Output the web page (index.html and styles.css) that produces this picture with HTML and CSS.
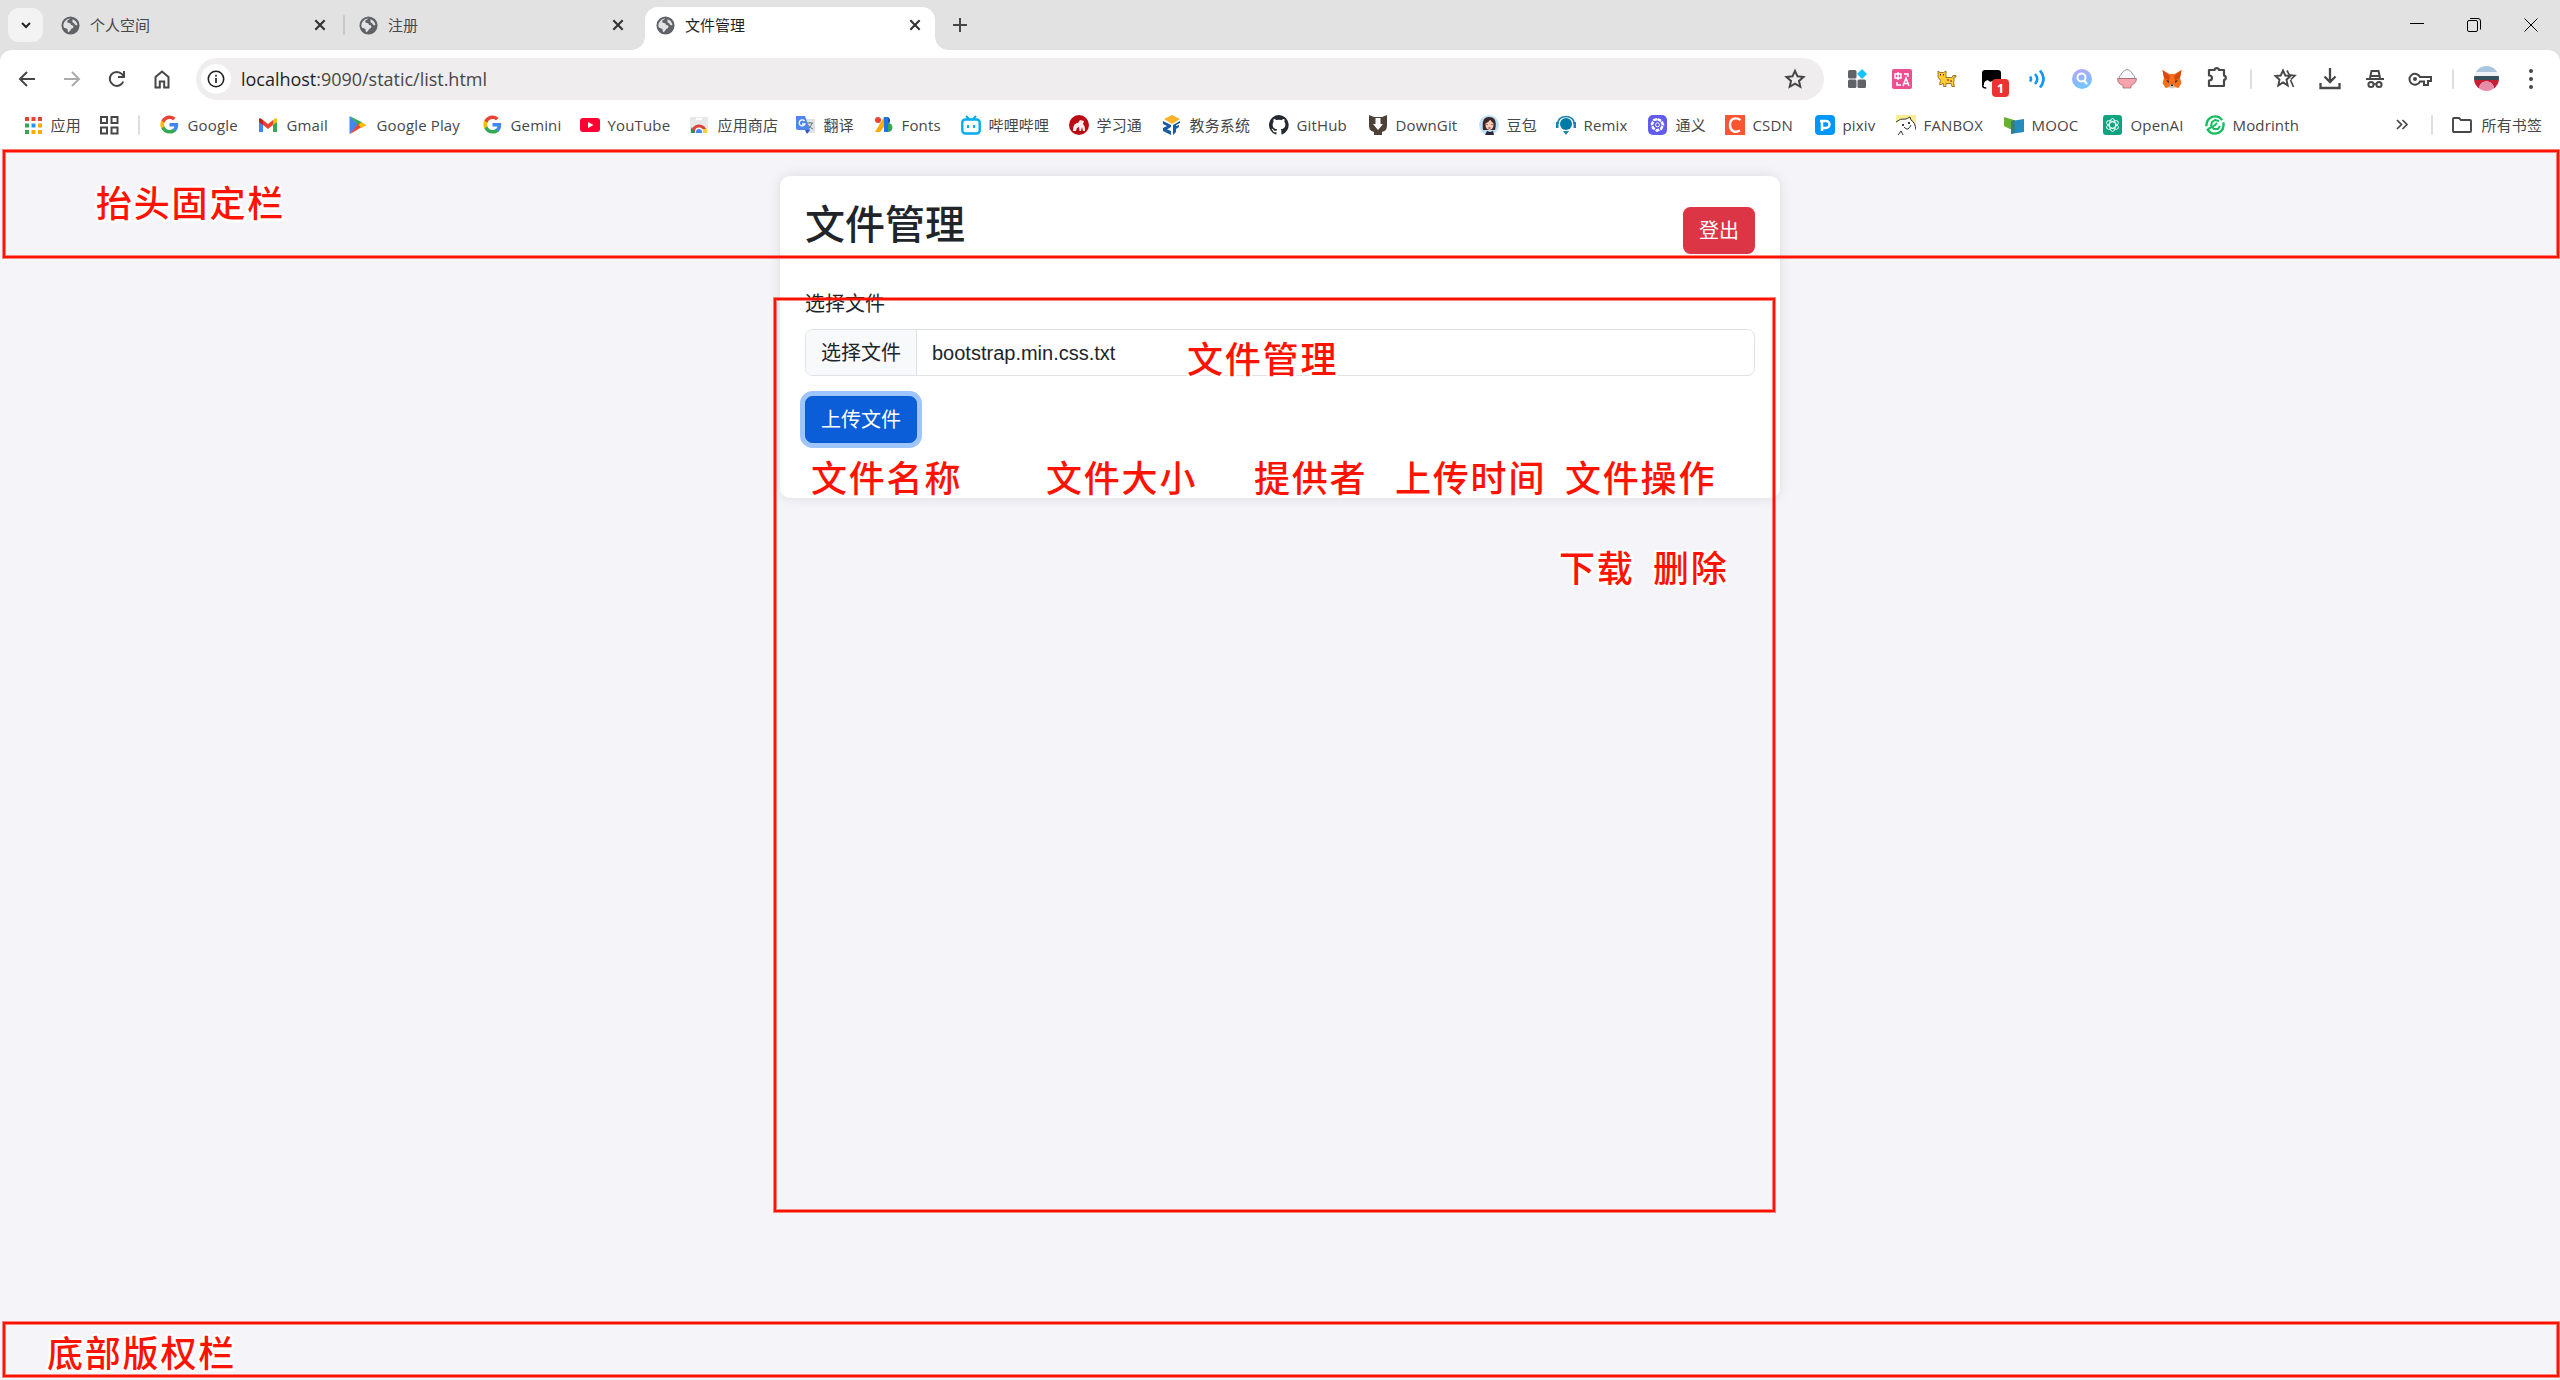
FILE: index.html
```
<!DOCTYPE html>
<html lang="zh-CN">
<head>
<meta charset="utf-8">
<title>文件管理</title>
<link rel="stylesheet" href="styles.css">
</head>
<body>
<svg width="0" height="0" class="defs">
  <symbol id="globe" viewBox="0 0 20 20"><circle cx="10" cy="10" r="9.5" fill="#5f6368"/><path d="M10 2.5c-1 1.500-3.200 1-3.500 3-.2 1.500 1.500 2 3 2 1 .3.300 1.500 1.500 2 1.500.5 2.500 1 2 2.500-.5 1-2 1-2.500 2-.5 1.300-1.500 2.500-3 3-.8-1-.2-2.500-1-3.500-1-.8-2.500-.5-3.500-1.500L2.500 10c0-4 3.500-7.500 7.500-7.500zM12 3.500c2.500.5 5 3.200 5.300 6-1.300.5-2.500 0-3-1.200-.4-1-1.800-1-2.200-2-.3-1 .4-1.800-.1-2.800z" fill="#e2e2e2"/></symbol>
  <symbol id="x" viewBox="0 0 12 12"><path d="M2 2l8 8M10 2l-8 8" stroke="currentColor" stroke-width="1.8"/></symbol>
  <symbol id="g" viewBox="0 0 48 48"><path fill="#4285f4" d="M46 24.500c0-1.600-.2-3.100-.4-4.500H24v9h12.400c-.5 2.900-2.200 5.300-4.600 7v6h7.500C43.500 38 46 31.800 46 24.500z"/><path fill="#34a853" d="M24 47c6.200 0 11.400-2.100 15.300-5.600l-7.500-5.800c-2.100 1.400-4.700 2.200-7.800 2.200-6 0-11.100-4-12.900-9.500H3.400v6C7.200 41.800 15 47 24 47z"/><path fill="#fbbc05" d="M11.100 28.300c-.9-2.800-.9-5.800 0-8.600v-6H3.400a23 23 0 0 0 0 20.600z"/><path fill="#ea4335" d="M24 10.200c3.400 0 6.400 1.200 8.800 3.400l6.600-6.600C35.400 3.300 30.200 1 24 1 15 1 7.200 6.200 3.400 13.700l7.700 6C12.900 14.200 18 10.200 24 10.200z"/></symbol>
  <symbol id="star" viewBox="0 0 24 24"><path d="M12 3.800l2.500 5.500 6 .6-4.500 4 1.300 5.900-5.300-3.100-5.300 3.100L8 13.900l-4.500-4 6-.6z" fill="none" stroke="#474747" stroke-width="2"/></symbol>
</svg>

<header class="browser">
  <div class="tabstrip">
    <button class="tab-search"><svg width="14" height="14" viewBox="0 0 14 14"><path d="M3 5l4 4 4-4" fill="none" stroke="#222" stroke-width="2"/></svg></button>
    <div class="tab first"><svg class="fav"><use href="#globe"/></svg><span>个人空间</span><svg class="close"><use href="#x"/></svg></div>
    <i class="tab-sep"></i>
    <div class="tab second"><svg class="fav"><use href="#globe"/></svg><span>注册</span><svg class="close"><use href="#x"/></svg></div>
    <div class="tab active"><svg class="fav"><use href="#globe"/></svg><span>文件管理</span><svg class="close"><use href="#x"/></svg></div>
    <button class="new-tab"><svg width="14" height="14" viewBox="0 0 14 14"><path d="M7 0v14M0 7h14" stroke="#474747" stroke-width="2"/></svg></button>
    <div class="win">
      <svg width="14" height="14" viewBox="0 0 14 14"><path d="M0 5.500h14" stroke="#000"/></svg>
      <svg width="14" height="14" viewBox="0 0 14 14"><rect x=".5" y="2.500" width="10" height="11" rx="1.500" fill="none" stroke="#000"/><path d="M3 .5h8a2.500 2.500 0 0 1 2.500 2.500v8.500" fill="none" stroke="#000"/></svg>
      <svg width="14" height="14" viewBox="0 0 14 14"><path d="M.5.500l13 13M13.500.500l-13 13" stroke="#000"/></svg>
    </div>
  </div>

  <div class="toolbar">
    <nav class="nav">
      <svg viewBox="0 0 20 20"><path d="M18 10H3M10 3l-7 7 7 7" fill="none" stroke="#474747" stroke-width="2"/></svg>
      <svg viewBox="0 0 20 20"><path d="M2 10h15M10 3l7 7-7 7" fill="none" stroke="#ababab" stroke-width="2"/></svg>
      <svg viewBox="0 0 20 20"><path d="M16.300 12.500A7 7 0 1 1 15 5.200L17 7.500M17 2v6h-6" fill="none" stroke="#474747" stroke-width="2"/></svg>
      <svg viewBox="0 0 20 20"><path d="M3.500 18.500V8L10 2.500 16.500 8v10.500h-4.300v-6H7.800v6z" fill="none" stroke="#474747" stroke-width="2"/></svg>
    </nav>
    <div class="omnibox">
      <span class="info"><svg width="20" height="20" viewBox="0 0 20 20"><circle cx="10" cy="10" r="7.700" fill="none" stroke="#222" stroke-width="1.600"/><path d="M10 9v5M10 5.800v1.800" stroke="#222" stroke-width="1.700"/></svg></span>
      <span class="url"><b>localhost</b>:9090/static/list.html</span>
      <svg class="bookmark-star"><use href="#star"/></svg>
    </div>
    <div class="exts">
      <svg viewBox="0 0 20 20"><g fill="#5f6368"><rect x="1" y="1" width="8.500" height="8.500" rx="1.500"/><rect x="1" y="10.500" width="8.500" height="8.500" rx="1.500"/><rect x="10.500" y="10.500" width="8.500" height="8.500" rx="1.500"/></g><path d="M15 0l5 5-5 5-5-5z" fill="#14c4ff"/></svg>
      <svg viewBox="0 0 20 20"><rect width="20" height="20" rx="2" fill="#ee4f91"/><path d="M3 5h6v4H3zM6 3v8M5 13v3h4M12 5h4v3M11 17l3-8 3 8M12 14.500h4" fill="none" stroke="#fff" stroke-width="1.500"/></svg>
      <svg viewBox="0 0 20 20"><path d="M1 2l2 1.500h3.500L9 2v6.500h6l1-2h3v1.500h-2v4l-.5 2 1 3.500h-2.500l-1-3H9v3H6.500l-.5-3.500-1.500 1.500H2.500l1-4L1 8z" fill="#fc3" stroke="#8d6b2c" stroke-width=".9"/><path d="M3.500 5v1.500M6.500 5v1.500M10 11h2M13 12h2" stroke="#714"/></svg>
      <span class="badged"><svg viewBox="0 0 20 20"><path d="M0 4a3 3 0 0 1 3-3h13a3 3 0 0 1 3 3v12H0z" fill="#000"/><path d="M2 18v-4c2-4 5-3 6-1 3-2 6-2 8 0v6H4z" fill="#fff"/><path d="M.800 13v4q0 2 3.500 2" fill="none" stroke="#000" stroke-width="1.500"/></svg><em>1</em></span>
      <svg viewBox="0 0 20 20"><path d="M3 7.500q2 2.500 0 5M8 5q4.500 5 0 10M13 1.500q7 8.500 0 17" fill="none" stroke="#1296f3" stroke-width="2.600"/></svg>
      <svg viewBox="0 0 20 20"><linearGradient id="lg" x2=".3" y2="1"><stop stop-color="#b8a4ff"/><stop offset="1" stop-color="#73c5ff"/></linearGradient><circle cx="10" cy="10" r="10" fill="url(#lg)"/><circle cx="9.500" cy="8.500" r="4" fill="none" stroke="#fff" stroke-width="2"/><path d="M12 11.500l3 3.500" stroke="#fff" stroke-width="2.200"/></svg>
      <svg viewBox="0 0 20 20"><path d="M2 9.500C2 7 4 6 5 4c1.500-2.500 3.500-3.300 5-3.300S13.500 1.500 15 4c1 2 3 3 3 5.500z" fill="#f7f9ff" stroke="#778" stroke-width=".8"/><path d="M.5 9.500h19c0 4-3 6-5.500 7v2.500H6v-2.500C3 15.500.500 13.500.500 9.500z" fill="#f4a4aa" stroke="#a35d69" stroke-width=".7"/></svg>
      <svg viewBox="0 0 20 20"><path d="M.5 1l7 4h5l7-4-1.500 8 1.500 5-3 5-4-1h-5l-4 1-3-5L2 9z" fill="#f5701d"/><path d="M.5 1L8 7l-1 5-5-3zM19.500 1L12 7l1 5 5-3z" fill="#d94a13"/><path d="M4 11l3 1-.5 2zM16 11l-3 1 .5 2z" fill="#222"/><path d="M7 18l1.500-3h3l1.500 3-1 1.200H8z" fill="#d7c5b8"/><path d="M8.500 15.500h3l-.5 1.500H9z" fill="#222"/></svg>
      <svg class="puzzle" viewBox="0 0 24 24"><path d="M4 5h5.500a2.300 2.300 0 0 1 4.500 0H19v5.500a2.300 2.300 0 0 1 0 4.500v6H4v-5.500c4 0 4-5 0-5z" fill="none" stroke="#474747" stroke-width="2.200" stroke-linejoin="round"/></svg>
    </div>
    <i class="sep"></i>
    <div class="tools">
      <svg viewBox="0 0 24 24"><path d="M10 3.500l2.300 5 5.200.5-4 3.700 1.200 5.800-4.700-3-4.700 3 1.200-5.800-4-3.700 5.200-.5z" fill="none" stroke="#474747" stroke-width="1.900"/><path d="M14 3.500l2.300 4.300 5.700.8-4.200 3.900M17.500 13l3 7" fill="none" stroke="#474747" stroke-width="1.700"/></svg>
      <svg viewBox="0 0 24 24"><path d="M12 1v14M6.500 9.500L12 15l5.500-5.500M2.500 16v5h19v-5" fill="none" stroke="#474747" stroke-width="2.300"/></svg>
      <svg viewBox="0 0 24 24"><path d="M3 12h18M7 11l1.500-7h7L17 11" fill="none" stroke="#474747" stroke-width="2"/><path d="M7.500 9h9" stroke="#474747" stroke-width="2"/><circle cx="8" cy="17.500" r="2.600" fill="none" stroke="#474747" stroke-width="2"/><circle cx="16" cy="17.500" r="2.600" fill="none" stroke="#474747" stroke-width="2"/><path d="M10.500 17h3" stroke="#474747" stroke-width="1.600"/></svg>
      <svg viewBox="0 0 24 24"><path d="M12 10a5.500 5.500 0 1 0 0 4.500h4V18h4v-4h3v-4z" fill="none" stroke="#474747" stroke-width="2"/><circle cx="7" cy="12" r="2" fill="#474747"/></svg>
    </div>
    <i class="sep"></i>
    <span class="avatar"></span>
    <svg class="menu" width="6" height="22" viewBox="0 0 6 22"><g fill="#474747"><circle cx="3" cy="3" r="2"/><circle cx="3" cy="11" r="2"/><circle cx="3" cy="19" r="2"/></g></svg>
  </div>

  <div class="bookmarks">
    <a class="apps"><svg viewBox="0 0 20 20"><g fill="#ea4335"><path d="M2 2h4v4H2zM8.500 2h4v4h-4zM15 2h4v4h-4z"/></g><path d="M2 8.500h4v4H2z" fill="#34a853"/><path d="M8.500 8.500h4v4h-4z" fill="#2196f3"/><path d="M15 8.500h4v4h-4zM8.500 15h4v4h-4zM15 15h4v4h-4z" fill="#fbab05"/><path d="M2 15h4v4H2z" fill="#34a853"/></svg>应用</a>
    <a><svg viewBox="0 0 20 20"><path d="M2 2h6v6H2zM12.500 2h6v6h-6zM2 12.500h6v6H2zM12.500 12.500h6v6h-6z" fill="none" stroke="#474747" stroke-width="2"/></svg></a>
    <i class="sep"></i>
    <a><svg viewBox="0 0 20 20"><use href="#g" width="19" height="19"/></svg>Google</a>
    <a><svg viewBox="0 0 20 20"><path d="M0 5v12h4V8z" fill="#4285f4"/><path d="M18 5v12h-4V8z" fill="#34a853"/><path d="M0 4v3l4 3V5L2 3.500Q0 3 0 4z" fill="#c5221f"/><path d="M18 4v3l-4 3V5l2-1.500q2-.5 2 .5z" fill="#fbbc04"/><path d="M4 5l5 4 5-4v5l-5 4-5-4z" fill="#ea4335"/></svg>Gmail</a>
    <a><svg viewBox="0 0 20 20"><path d="M.5 1v18l9-9z" fill="#4285f4"/><path d="M.5 1l13 6.500-4 3z" fill="#34a853"/><path d="M.5 19.500l13-8-4-3z" fill="#ea4335"/><path d="M12.500 7l5 3-5 3-3-3z" fill="#fbbc04"/></svg>Google Play</a>
    <a><svg viewBox="0 0 20 20"><use href="#g" width="19" height="19"/></svg>Gemini</a>
    <a><svg viewBox="0 0 20 20"><rect y="3" width="20" height="14" rx="3" fill="#ff0033"/><path d="M8 7l5.500 3L8 13z" fill="#fff"/></svg>YouTube</a>
    <a><svg viewBox="0 0 20 20"><path d="M0 2h18v16H0z" fill="#e8e8e8"/><path d="M6 3h6v2H6z" fill="#fff"/><path d="M1 18a8 8 0 0 1 16-1z" fill="#db4437"/><path d="M1 12l4 6H1z" fill="#0f9d58"/><path d="M11 18l1-4h5v4z" fill="#ffcd40"/><circle cx="9" cy="16.500" r="4" fill="#fff"/><circle cx="9" cy="17" r="3" fill="#4285f4"/><path d="M0 18h20v2H0z" fill="#fff"/></svg>应用商店</a>
    <a><svg viewBox="0 0 20 20"><path d="M7 4h12v14H10z" fill="#e0e0e0"/><path d="M11 8h6M14 7v1M16 8q-1 4-4 6M12 10q2 3 5 4" stroke="#607d8b" fill="none"/><path d="M0 1h9l5 14H2q-2 0-2-2z" fill="#4f86ec"/><path d="M9 15h5l-3 4z" fill="#2a56c6"/><path d="M8.500 6A3 3 0 1 0 9 9H6" stroke="#fff" stroke-width="1.300" fill="none"/></svg>翻译</a>
    <a><svg viewBox="0 0 20 20"><circle cx="4" cy="5" r="3" fill="#ea4335"/><path d="M10 2h3v6L6 17H1z" fill="#fbab00"/><path d="M10 2h4v15h-4z" fill="#1a73e8"/><path d="M14 2a4 4 0 0 1 0 7z" fill="#174ea6"/><path d="M14 8a4.500 4.500 0 0 1 0 9z" fill="#34a853"/></svg>Fonts</a>
    <a><svg viewBox="0 0 20 20"><path d="M5 1l3 3M15 1l-3 3" stroke="#00aeec" stroke-width="2"/><rect x="1.300" y="4.500" width="17.400" height="14" rx="3" fill="none" stroke="#00aeec" stroke-width="2.400"/><path d="M7 10v3M13 10v3" stroke="#00aeec" stroke-width="2"/></svg>哔哩哔哩</a>
    <a><svg viewBox="0 0 20 20"><circle cx="10" cy="10" r="10" fill="#b90b13"/><path d="M4 16c0-6 2-8 5-8l2-3 4 1-1 3c2 2 2 4 2 7h-2l-1-4-1 4h-1.500l-.5-4-2 1-1 3z" fill="#ffebea"/></svg>学习通</a>
    <a><svg viewBox="0 0 20 20"><path d="M10 0l8 4-8 5-8-5z" fill="#f8b329"/><path d="M1 6l8 4v2l-4 2.500 4 1.500v4l-8-4v-3l4-2-4-2z" fill="#195ba6"/><path d="M18 6l-7 4v10l3-3v-3l3-2v-2l-3 1v-1l4-2z" fill="#195ba6"/></svg>教务系统</a>
    <a><svg viewBox="0 0 16 16"><path fill="#24292f" d="M8 0a8 8 0 0 0-2.500 15.600c.4.100.5-.2.500-.4v-1.500c-2 .4-2.600-.5-2.800-1-.1-.2-.5-1-.8-1.100-.3-.2-.7-.6 0-.6s1.100.6 1.200.8c.7 1.200 1.900.9 2.400.7.1-.5.300-.9.500-1.100-1.800-.2-3.600-.9-3.600-4 0-.8.300-1.600.8-2.100-.1-.2-.4-1 .1-2.100 0 0 .7-.2 2.200.8a7.500 7.500 0 0 1 4 0c1.500-1 2.200-.8 2.200-.8.4 1.100.2 1.900.1 2.100.5.600.8 1.300.8 2.100 0 3.100-1.900 3.800-3.700 4 .3.200.5.700.5 1.500v2.200c0 .2.200.5.600.4A8 8 0 0 0 8 0z"/></svg>GitHub</a>
    <a><svg viewBox="0 0 20 20"><path d="M1 0l5 2h8l5-2v10c0 5-2 6-5 7v3H6v-3c-3-1-5-2-5-7z" fill="#4d4038"/><path d="M7.500 3h5v6h2.500l-5 6-5-6h2.500z" fill="#fff"/></svg>DownGit</a>
    <a><svg viewBox="0 0 20 20"><circle cx="10" cy="10" r="10" fill="#bfdff8"/><path d="M4 15c-1-8 0-13 6-13s8 4 6 13z" fill="#3b2826"/><ellipse cx="10.500" cy="10" rx="4" ry="5" fill="#f8cbb8"/><path d="M6 20l2-4 3 1 3-1 1 4z" fill="#282838"/><path d="M6 8q4 0 5-4 1 3 4 4V4H6z" fill="#3b2826"/><path d="M8 9v1M13 9v1M9.500 13h2" stroke="#712"/></svg>豆包</a>
    <a><svg viewBox="0 0 20 20"><circle cx="10" cy="9" r="6" fill="#007aa6"/><path d="M2 9C1 -1 19 -1 18 9" fill="none" stroke="#1b84a8" stroke-width="1.600"/><path d="M0 7h2.500v6H0zM17.500 7H20v6h-2.500zM7 16h6l-3 4z" fill="#1b84a8"/></svg>Remix</a>
    <a><svg viewBox="0 0 20 20"><rect width="19" height="20" rx="5" fill="#615ced"/><path d="M9.500 4l4 2 1.500 4-2 4-4 1.500L5 13 4 9l2-4z" fill="none" stroke="#fff" stroke-width="2.500" stroke-dasharray="4 1"/><circle cx="9.500" cy="9.800" r="2" fill="none" stroke="#fff"/></svg>通义</a>
    <a><svg viewBox="0 0 20 20"><rect width="20" height="20" fill="#fc5531"/><path d="M15.500 5C10 1.500 5 4 5 10s5 8.500 10 5.500" fill="none" stroke="#fff" stroke-width="2.400"/></svg>CSDN</a>
    <a><svg viewBox="0 0 20 20"><rect width="20" height="20" rx="4" fill="#0096fa"/><path d="M7 16V6H5M7 6h4a3.500 3.500 0 0 1 0 7H7" fill="none" stroke="#fff" stroke-width="2.500"/></svg>pixiv</a>
    <a><svg viewBox="0 0 20 20"><path d="M0 0h20v13H0z" fill="#f9ee93"/><path d="M0 20V9q3-5 10-5l4-2 1 3q4 2 5 10v5z" fill="#fff"/><path d="M0 7q4-4 10-3l4-2 1 3q4 2 5 10M2 20l3-4 2 4M8 12q4 5 7-2" fill="none" stroke="#333"/><circle cx="7" cy="10" r="1"/><circle cx="13" cy="8" r="1"/></svg>FANBOX</a>
    <a><svg viewBox="0 0 20 20"><path d="M0 2l10 3v11L0 11z" fill="#67b12e"/><path d="M7 6l13-2v13L7 19z" fill="#258dbd"/><path d="M7 6l4-1v12l-4 2z" fill="#397d83"/></svg>MOOC</a>
    <a><svg viewBox="0 0 20 20"><rect width="19" height="20" rx="3" fill="#10a37f"/><g fill="none" stroke="#fff" stroke-width="1"><ellipse cx="9.500" cy="10" rx="3" ry="6.500"/><ellipse cx="9.500" cy="10" rx="3" ry="6.500" transform="rotate(60 9.500 10)"/><ellipse cx="9.500" cy="10" rx="3" ry="6.500" transform="rotate(120 9.500 10)"/></g></svg>OpenAI</a>
    <a><svg viewBox="0 0 20 20"><circle cx="10" cy="10" r="8.600" fill="none" stroke="#18bd61" stroke-width="2.400" stroke-dasharray="23 2.500"/><path d="M14 6l-4-1-3 2-1 4 3 3h4l2-3M3 14l4-2 3-2 2-2" fill="none" stroke="#18bd61" stroke-width="2"/></svg>Modrinth</a>
    <a><svg viewBox="0 0 20 20"><path d="M2 5l4.500 4.500L2 14M7.500 5l4.500 4.500L7.500 14" fill="none" stroke="#474747" stroke-width="1.700"/></svg></a>
    <i class="sep"></i>
    <a class="all"><svg viewBox="0 0 22 20"><path d="M1 4q0-1 1-1h5l2 2h9q1 0 1 1v10q0 1-1 1H2q-1 0-1-1z" fill="none" stroke="#474747" stroke-width="1.900"/></svg>所有书签</a>
  </div>
</header>

<main class="page">
  <section class="card">
    <div class="card-head"><h2>文件管理</h2><button class="btn danger">登出</button></div>
    <label>选择文件</label>
    <div class="file-input"><span class="choose">选择文件</span><span class="name">bootstrap.min.css.txt</span></div>
    <button class="btn primary">上传文件</button>
  </section>
</main>

<div class="annotations">
  <div class="box top"></div>
  <div class="box middle"></div>
  <div class="box bottom"></div>
  <span class="note n-top">抬头固定栏</span>
  <span class="note n-title">文件管理</span>
  <span class="note n-name">文件名称</span>
  <span class="note n-size">文件大小</span>
  <span class="note n-owner">提供者</span>
  <span class="note n-time">上传时间</span>
  <span class="note n-ops">文件操作</span>
  <span class="note n-download">下载</span>
  <span class="note n-delete">删除</span>
  <span class="note n-footer">底部版权栏</span>
</div>
</body>
</html>
```
FILE: styles.css
```
* { box-sizing: border-box; }
body {
  margin: 0;
  position: relative;
  width: 2560px;
  height: 1380px;
  overflow: hidden;
  background: #f4f4f9;
  font-family: "Open Sans", "Noto Sans CJK SC", sans-serif;
}
button { border: 0; padding: 0; font: inherit; background: none; }
svg { display: block; flex: none; }
.defs { position: absolute; }

/* browser chrome */
.browser { height: 150px; background: #e2e2e2; font-size: 15px; color: #474747; }
.tabstrip { height: 50px; display: flex; align-items: center; padding-left: 8px; }
.tab-search { width: 35px; height: 34px; border-radius: 11px; background: #f3f3f3; display: grid; place-items: center; }
.tab { display: flex; align-items: center; height: 34px; line-height: 34px; }
.tab .fav { width: 19px; height: 19px; margin-right: 10px; }
.tab .close { width: 14px; height: 14px; margin-left: auto; color: #333; }
.tab.first { width: 300px; padding: 0 16px 0 18px; }
.tab-sep { width: 2px; height: 20px; background: #c7c7c7; border-radius: 1px; }
.tab.second { width: 300px; padding: 0 20px 0 14px; }
.tab.active {
  position: relative;
  width: 290px;
  height: 43px;
  margin-top: 7px;
  padding: 0 13px 7px 11px;
  background: #fff;
  border-radius: 13px 13px 0 0;
  color: #1f1f1f;
}
.tab.active::before, .tab.active::after { content: ""; position: absolute; bottom: 0; width: 13px; height: 13px; }
.tab.active::before { left: -13px; background: radial-gradient(circle at 0 0, transparent 12.5px, #fff 13px); }
.tab.active::after { right: -13px; background: radial-gradient(circle at 100% 0, transparent 12.5px, #fff 13px); }
.new-tab { margin-left: 18px; }
.win { margin-left: auto; margin-right: 22px; display: flex; gap: 43px; }

.toolbar {
  height: 57px;
  background: #fff;
  border-radius: 12px 12px 0 0;
  display: flex;
  align-items: center;
}
.nav { display: flex; flex: none; width: 196px; padding-left: 17px; gap: 25px; }
.nav svg { width: 20px; height: 20px; }
.omnibox {
  flex: none;
  width: 1628px;
  height: 42px;
  padding: 0 17px 0 5px;
  background: #efedee;
  border-radius: 21px;
  display: flex;
  align-items: center;
}
.info { width: 30px; height: 30px; border-radius: 50%; background: #fff; display: grid; place-items: center; }
.url { margin-left: 10px; font-size: 18px; line-height: 30px; letter-spacing: -.02px; }
.url b { font-weight: 400; color: #1f1f1f; }
.bookmark-star { width: 24px; height: 24px; margin-left: auto; }
.exts { display: flex; gap: 25px; margin-left: 23px; align-items: center; }
.exts svg { width: 20px; height: 20px; }
.exts .puzzle { width: 24px; height: 24px; margin: -3px -2px 0; }
.badged { position: relative; }
.badged em {
  position: absolute;
  left: 10px;
  top: 10px;
  width: 17px;
  height: 18px;
  border-radius: 4px;
  background: #ee3131;
  color: #fff;
  font: 700 13px/18px "Open Sans", sans-serif;
  text-align: center;
}
.sep { width: 2px; height: 20px; background: #dedede; border-radius: 1px; }
.exts + .sep { margin-left: 23px; }
.tools { display: flex; gap: 21px; margin: 0 20px 0 21px; }
.tools svg { width: 24px; height: 24px; }
.avatar {
  width: 25px;
  height: 25px;
  margin-left: 20px;
  border-radius: 50%;
  background: radial-gradient(ellipse 8px 8px at 50% 92%, #e78ca8 95%, transparent), linear-gradient(#a9c6dd 0 22%, #eff3f5 25% 38%, #38505b 42% 55%, #c51f35 58%);
}
.menu { margin-left: 29px; }

.bookmarks {
  height: 43px;
  padding: 0 0 7px 23px;
  background: #fff;
  border-bottom: 1px solid #ececec;
  display: grid;
  align-items: center;
  grid-template-columns: 76px 39px 22px 99px 90px 134px 97px 110px 106px 78px 87px 108px 93px 107px 99px 111px 77px 92px 77px 90px 81px 108px 99px 102px 190px 36px 21px auto;
  white-space: nowrap;
}
.bookmarks a { display: flex; align-items: center; gap: 7.5px; line-height: 22px; letter-spacing: .15px; }
.bookmarks a svg { width: 20px; height: 20px; }
.bookmarks .all svg { width: 22px; }

/* page */
.page { padding-top: 26px; }
.card {
  width: 1000px;
  height: 322px;
  margin: 0 auto;
  padding: 25px;
  background: #fff;
  border-radius: 10px;
  box-shadow: 0 0 12.5px rgba(0, 0, 0, .1);
  color: #212529;
  font: 20px/30px "Liberation Sans", "Noto Sans CJK SC", sans-serif;
}
.card-head { display: flex; justify-content: space-between; height: 88px; }
h2 { margin: 0; font-size: 40px; line-height: 48px; font-weight: 500; }
.btn { height: 47px; border-radius: 7.5px; color: #fff; line-height: 46px; display: block; }
.danger { width: 72px; margin-top: 6px; background: #dc3545; }
label { display: block; height: 40px; line-height: 30px; }
.file-input {
  display: flex;
  height: 47px;
  border: 1px solid #dee2e6;
  border-radius: 7.5px;
  line-height: 46px;
  overflow: hidden;
}
.choose { width: 111px; padding-left: 15px; background: #f8f9fa; border-right: 1px solid #dee2e6; }
.name { padding-left: 15px; }
.primary { width: 112px; margin-top: 20px; background: #0b5ed7; border: 1px solid #0a58ca; line-height: 44px; box-shadow: 0 0 0 5px #9ec5fe; }

/* hand-drawn markup layer over the window */
.annotations { position: absolute; inset: 0; pointer-events: none; }
.box {
  position: absolute;
  border: 2px solid #ff1200;
  box-shadow: 0 0 0 1px rgba(255, 18, 0, .5), inset 0 0 0 1px rgba(255, 18, 0, .5);
}
.box.top { left: 3px; top: 150px; width: 2556px; height: 108px; }
.box.middle { left: 774px; top: 298px; width: 1001px; height: 914px; }
.box.bottom { left: 3px; top: 1322px; width: 2556px; height: 55px; }
.note {
  position: absolute;
  color: #ff1200;
  font: 500 36px/40px "Noto Sans CJK SC", sans-serif;
  letter-spacing: 1.8px;
  white-space: nowrap;
  text-shadow: 2.500px 0 #fff, -2.500px 0 #fff, 0 2.500px #fff, 0 -2.500px #fff, 2px 2px #fff, -2px 2px #fff, 2px -2px #fff, -2px -2px #fff;
}
.n-top { left: 96px; top: 181px; }
.n-title { left: 1187px; top: 337px; }
.n-name { left: 811px; top: 456px; }
.n-size { left: 1046px; top: 456px; }
.n-owner { left: 1254px; top: 456px; }
.n-time { left: 1395px; top: 456px; }
.n-ops { left: 1565px; top: 456px; }
.n-download { left: 1559px; top: 546px; }
.n-delete { left: 1653px; top: 546px; }
.n-footer { left: 47px; top: 1331px; }
```
